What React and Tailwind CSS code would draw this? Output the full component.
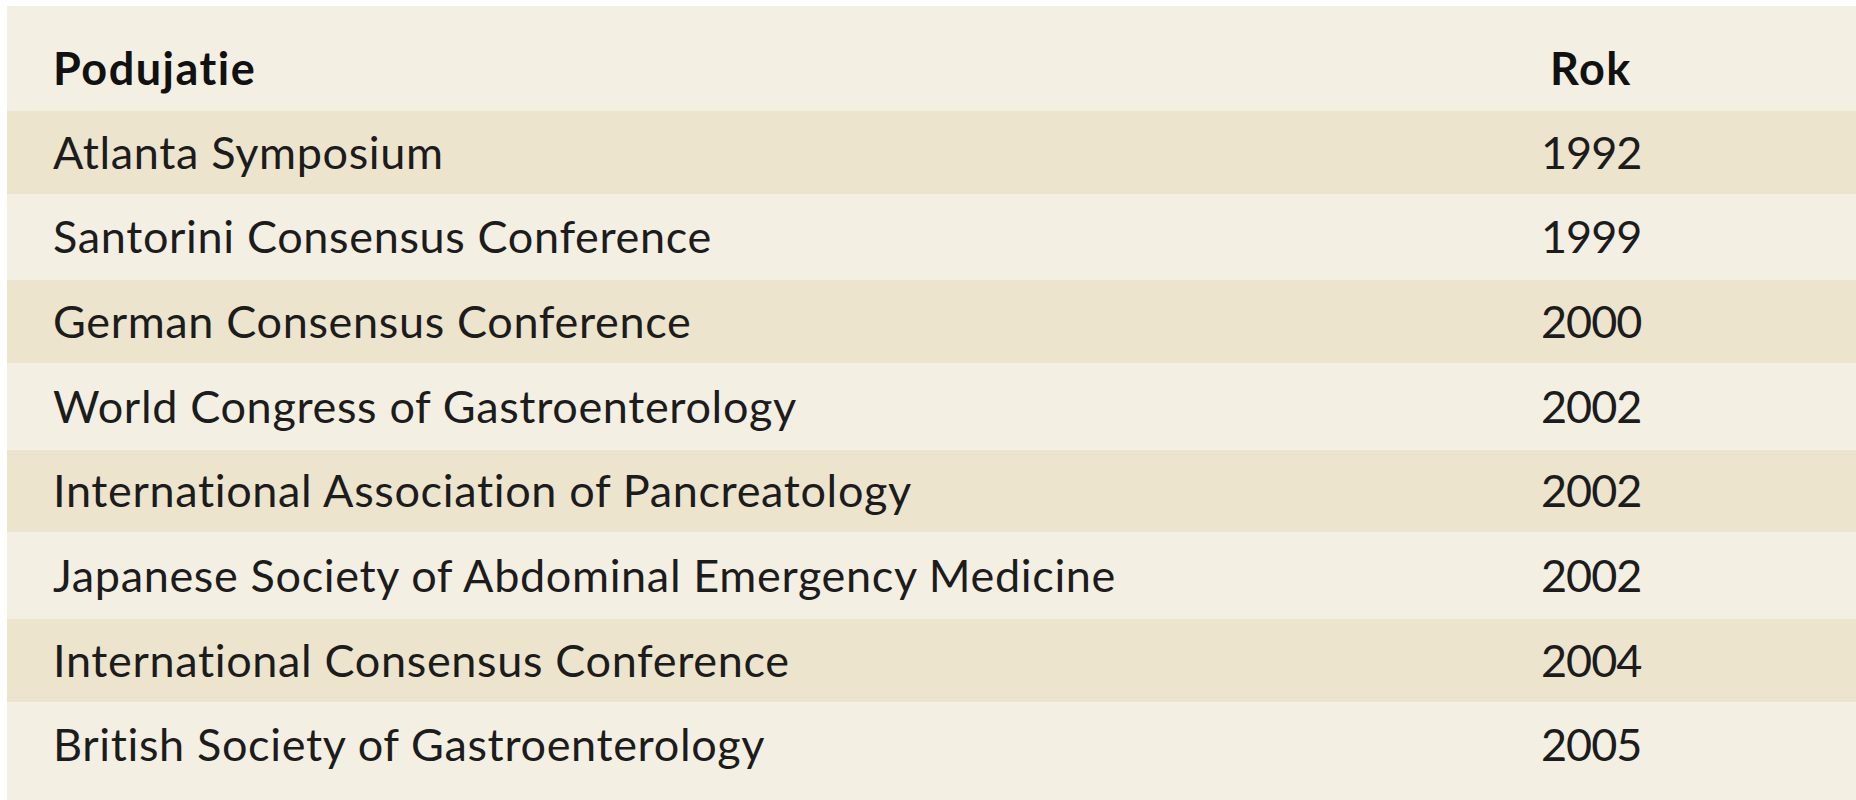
import React from "react";

const rows = [
  ["Atlanta Symposium", "1992"],
  ["Santorini Consensus Conference", "1999"],
  ["German Consensus Conference", "2000"],
  ["World Congress of Gastroenterology", "2002"],
  ["International Association of Pancreatology", "2002"],
  ["Japanese Society of Abdominal Emergency Medicine", "2002"],
  ["International Consensus Conference", "2004"],
  ["British Society of Gastroenterology", "2005"],
];

export default function App() {
  return (
    <div
      className="w-full h-[800px] bg-white pt-[6px] pl-[7px] overflow-hidden [font-variant-ligatures:none]"
      style={{ fontFamily: "Lato, 'Noto Sans', sans-serif" }}
    >
      <div className="h-full bg-[#f4efe3] pt-[21px] text-[45px] text-[#1c1c1c]">
        <div className="flex h-[84px] items-center font-bold text-[#111] tracking-[1.5px]">
          <div className="w-[1534px] pl-[46px]">Podujatie</div>
          <div className="w-[100px] text-center">Rok</div>
        </div>
        {rows.map(([name, year], i) => (
          <div
            key={i}
            className={
              i % 2 === 0
                ? "flex h-[82.67px] items-center bg-[#ede4ce]"
                : "flex h-[86.67px] items-center"
            }
          >
            <div className="w-[1534px] pl-[46px] whitespace-nowrap tracking-[0.65px]">{name}</div>
            <div className="w-[100px] text-center tracking-[-1px]">{year}</div>
          </div>
        ))}
      </div>
    </div>
  );
}
